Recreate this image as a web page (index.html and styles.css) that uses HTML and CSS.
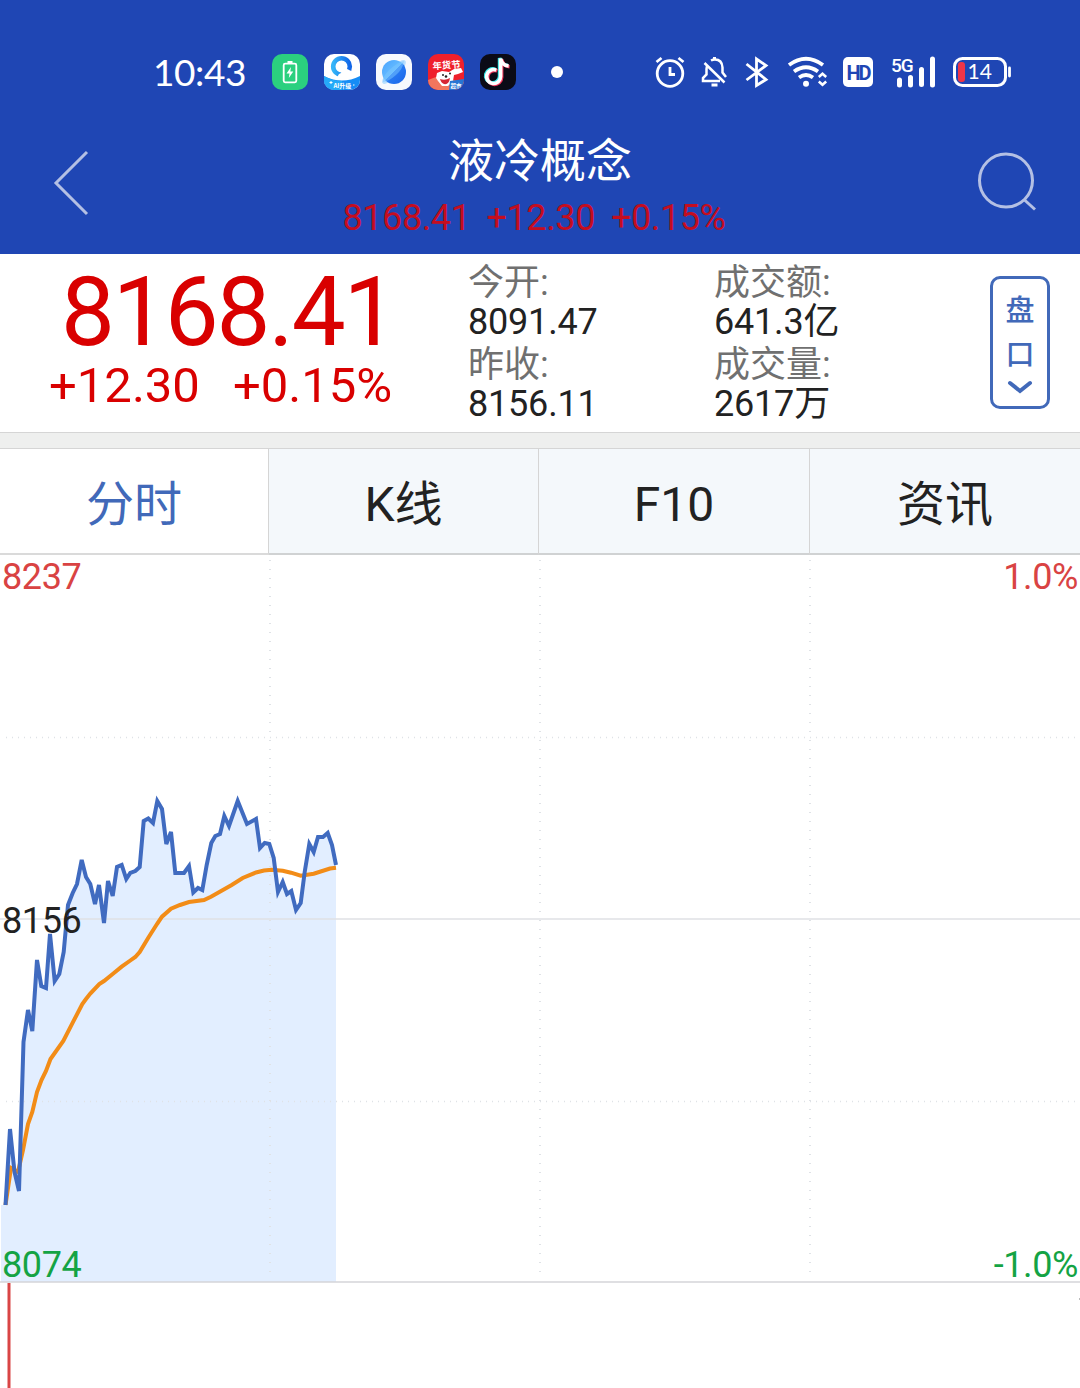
FILE: index.html
```html
<!DOCTYPE html>
<html lang="zh-CN">
<head>
    <meta charset="UTF-8">
    <meta name="viewport" content="width=device-width, initial-scale=1.0">
    <title>液冷概念</title>
    <link rel="stylesheet" href="styles.css">
</head>
<body>
    <div class="status-bar">
        <span class="time">10:43</span>
        <div class="apps">
            <svg width="36" height="36" viewBox="0 0 36 36">
                <rect width="36" height="36" rx="10" fill="#2bd07f"/>
                <rect x="11.700" y="9.700" width="12.600" height="18.600" rx="1.500" fill="none" stroke="#fff" stroke-width="1.800"/>
                <rect x="15.500" y="7" width="5" height="3" fill="#fff"/>
                <path d="M19 13l-4.500 6.500h3l-.7 4.500 4.500-6.500h-3z" fill="#fff"/>
            </svg>
            <svg width="36" height="36" viewBox="0 0 36 36">
                <defs>
                    <clipPath id="app-clip"><rect width="36" height="36" rx="10"/></clipPath>
                    <linearGradient id="ring" x1="0" y1="0" x2="1" y2="0"><stop offset="0" stop-color="#35b5f8"/><stop offset="1" stop-color="#1267e8"/></linearGradient>
                </defs>
                <g clip-path="url(#app-clip)">
                    <rect width="36" height="36" fill="#fff"/>
                    <path d="M0 22Q18 31 36 22V36H0z" fill="#168cf5"/>
                    <path d="M0 22Q8 27 18 27V36H0z" fill="#25aaf8"/>
                    <circle cx="17.500" cy="12.500" r="8.300" fill="none" stroke="url(#ring)" stroke-width="4.600"/>
                    <path d="M14 24a4 4 0 0 1 3-5 5 5 0 0 1 8-3 5 5 0 0 1 3 8z" fill="#fff"/>
                    <text x="9.500" y="34" class="app-text" font-size="6">AI升级</text>
                    <path d="M7 27v3M5.500 28.500h3M29 31h1.500" stroke="#fff" stroke-width="1"/>
                </g>
            </svg>
            <svg width="36" height="36" viewBox="0 0 36 36">
                <defs><linearGradient id="planet" x1="0" y1="0" x2="1" y2="1"><stop offset="0" stop-color="#48a2ff"/><stop offset=".48" stop-color="#65bcff"/><stop offset=".5" stop-color="#287cf4"/><stop offset="1" stop-color="#1a63e8"/></linearGradient></defs>
                <rect width="36" height="36" rx="10" fill="#f7f9fd"/>
                <ellipse cx="18" cy="18" rx="16" ry="5" transform="rotate(-45 18 18)" fill="#b8dfff"/>
                <circle cx="18" cy="18" r="12" fill="url(#planet)"/>
                <path d="M7 28Q6 23 13 16 22 8 28 7 27 15 20 21 12 28 7 28z" fill="#7ac5ff" opacity=".5"/>
            </svg>
            <svg width="36" height="36" viewBox="0 0 36 36">
                <g clip-path="url(#app-clip)">
                    <rect width="36" height="36" fill="#ef202b"/>
                    <path d="M0 26l8-3 18 3 10 2v8H0z" fill="#f2765d"/>
                    <path d="M9 19l5-2 7 1 5-3 7-1 2 4-5 2-4 1-1 6-5 5-6 0-4-5-2-3z" fill="#fff"/>
                    <path d="M12 25q5 2 10-1-1 7-6 6-3-1-4-5z" fill="#d72634"/>
                    <circle cx="15" cy="21" r="1" fill="#222"/><circle cx="22" cy="19.500" r="1" fill="#222"/>
                    <circle cx="18" cy="22.500" r="1.300" fill="#222"/>
                    <text x="4.500" y="14.500" class="app-text" font-size="9.300" transform="rotate(-4 18 10)">年货节</text>
                    <path d="M22 27l14-2v11H21z" fill="#2775d4"/>
                    <text x="22.500" y="33.500" class="app-text" font-size="5.500">超市</text>
                </g>
            </svg>
            <svg width="36" height="36" viewBox="0 0 36 36">
                <rect width="36" height="36" rx="10" fill="#0b0b16"/>
                <g fill="none" stroke-width="3.600">
                    <path d="M16.500 16a7 7 0 1 0 4.300 6.500V4.500c1 4.500 4 7 8 7.300" stroke="#35e5e5" transform="translate(-1.200 -.6)"/>
                    <path d="M16.500 16a7 7 0 1 0 4.300 6.500V4.500c1 4.500 4 7 8 7.300" stroke="#f4365b" transform="translate(.8 .9)"/>
                    <path d="M16.500 16a7 7 0 1 0 4.300 6.500V4.500c1 4.500 4 7 8 7.300" stroke="#fff" transform="translate(-.2 .1)"/>
                </g>
            </svg>
        </div>
        <span class="dot"></span>
        <div class="signals">
            <svg width="30" height="36" viewBox="655 54 30 36" fill="none" stroke="#fff" stroke-width="2.800">
                <circle cx="670" cy="73.500" r="12.800"/>
                <path d="M656.500 62l5-4M683.500 62l-5-4M670 67v7.500h5"/>
            </svg>
            <svg class="bell" width="28" height="36" viewBox="701 54 28 36" fill="none" stroke="#fff" stroke-width="2.500">
                <path d="M707.500 65q-1 1.500-1 4v5.500l-3.500 3.500v3h17M711 60.500q2-1 4-1 7 0 7.500 8v5l3.500 4.500M704.500 63l20 19.500"/>
                <path d="M714.500 57v3M711.500 85h6" stroke-width="3"/>
            </svg>
            <svg class="bluetooth" width="24" height="36" viewBox="745 54 24 36" fill="none" stroke="#fff" stroke-width="2.800">
                <path d="M746.500 64l19.500 15.500-9.500 6V59l9.500 6.500-19.500 14.500"/>
            </svg>
            <svg class="wifi" width="40" height="36" viewBox="787 54 40 36" fill="none" stroke="#fff" stroke-width="3.800">
                <path d="M789 65q17-12.500 34 0M794 71.500q12-8.500 24 0M799 77.500q7-5 14 0"/>
                <circle cx="806" cy="83.800" r="3" fill="#fff" stroke="none"/>
                <path d="M818.800 77l3.700-3.300 3.700 3.300M818.800 81.500l3.700 3.300 3.700-3.300" stroke-width="2.500"/>
            </svg>
            <svg class="hd" width="30" height="36" viewBox="0 0 30 36">
                <rect y="3" width="30" height="30" rx="5" fill="#fff"/>
                <text x="3.500" y="25.500" class="hd-text">HD</text>
            </svg>
            <svg class="cell" width="44" height="36" viewBox="891 54 44 36">
                <text x="891" y="71.500" class="cell-text">5G</text>
                <path d="M899.500 80v5M910.500 77.500v7.500M921.500 69.500v15M932.500 59v26" stroke="#fff" stroke-width="5" stroke-linecap="round"/>
            </svg>
            <svg class="battery" width="58" height="36" viewBox="953 54 58 36">
                <rect x="954.500" y="58.500" width="51" height="27" rx="8" fill="none" stroke="#fff" stroke-width="3"/>
                <rect x="958" y="62" width="7" height="20" rx="3" fill="#ef3548"/>
                <path d="M1009.500 68v8" stroke="#fff" stroke-width="2.800" stroke-linecap="round"/>
                <text x="967.500" y="79" class="battery-text">14</text>
            </svg>
        </div>
    </div>

    <header class="title-bar">
        <svg class="back" width="36" height="64" viewBox="0 0 36 64"><path d="M34 1L3 32l31 31"/></svg>
        <div class="title">
            <h1>液冷概念</h1>
            <p class="sub-quote"><span>8168.41</span><span>+12.30</span><span>+0.15%</span></p>
        </div>
        <svg class="search" width="60" height="60" viewBox="0 0 60 60"><circle cx="28" cy="28.500" r="26.500"/><path d="M46 47.500l11 10"/></svg>
    </header>

    <section class="quote">
        <div class="price">
            <div class="price-now">8168.41</div>
            <div class="price-change"><span>+12.30</span><span>+0.15%</span></div>
        </div>
        <dl class="stats">
            <dt>今开:</dt><dd>8091.47</dd>
            <dt>昨收:</dt><dd>8156.11</dd>
        </dl>
        <dl class="stats">
            <dt>成交额:</dt><dd>641.3亿</dd>
            <dt>成交量:</dt><dd>2617万</dd>
        </dl>
        <button class="pankou">
            <span>盘</span>
            <span>口</span>
            <svg width="26" height="16" viewBox="0 0 26 16"><path d="M3 4l10 8 10-8"/></svg>
        </button>
    </section>

    <nav class="tabs">
        <a class="tab active">分时</a>
        <a class="tab kline">K线</a>
        <a class="tab latin">F10</a>
        <a class="tab">资讯</a>
    </nav>

    <svg class="chart" width="1080" height="833" viewBox="0 555 1080 833">
        <path class="area" d="M1 1282V1205H5.500L10 1131 14.500 1172 19 1190 23.500 1042 28 1010 32.300 1031 37 960 41.300 986 46 988 50 934 54.700 981 59.300 974 63.700 952 68 905 72.700 893 77 884 81.700 860 86 877 90.300 884 95 904 99 885 104 923 108 881 112.700 896 117 867 121.700 865 126.300 879 130.300 873 135.300 871 139.700 867 143.700 821 148.300 818.500 153 823 157 799 162 809 166.300 844 171 832 175.300 873 184 873 189 865 193.300 892.500 198 888 202.300 890 206.700 865 211.300 843 215.300 836 220 834 224.300 815 229 826 237.700 801 247 824 256 819 260 848 264.700 843 269.300 844 273.700 858 278 892 282.700 882 287 894 291.300 891 296 910 300.700 903 304.700 872 309.300 843 313.700 852 318 837 323 837 327.700 833 332 845 336 865V1282z"/>
        <path class="grid-x" d="M6 737.500H1080M6 1101.500H1080"/>
        <path class="grid-y" d="M270 560V1280M540 560V1280M810 560V1280"/>
        <path class="line-mid" d="M0 919H1080"/>
        <path class="line-bottom" d="M0 1282H1080"/>
        <!-- average price -->
        <polyline class="average" points="5.500,1205 11,1168 18,1172 23,1150 28,1124 32.300,1112 37,1092 41.500,1080 46,1071 50.500,1059 63.300,1041 72.700,1022.700 82.300,1004 86,999 90.300,993.500 99.300,984 104,981 112.700,974 121.700,966.700 130.300,960.500 135.300,957 139.700,952 148.300,937.700 157,924 162,916.700 171,908.700 180,905 189,902 204,900 211,896.700 231.700,885 242.700,878 256,872.500 264,870.500 271.700,869.700 282.700,870.700 291,872.700 300.700,875.700 313.700,873.700 330,868.500 336,867.700"/>
        <!-- current price -->
        <polyline class="current" points="5.500,1205 10,1129 14.500,1172 19,1191 23.500,1042 28,1010 32.300,1031 37,960 41.300,986 46,988 50,934 54.700,981 59.300,974 63.700,952 68,905 72.700,893 77,884 81.700,860 86,877 90.300,884 95,904 99,885 104,923 108,881 112.700,896 117,867 121.700,865 126.300,879 130.300,873 135.300,871 139.700,867 143.700,821 148.300,818.500 153,823 157.300,801 162,809 166.300,844 171,832 175.300,873 184,873 189,866 193.300,892.500 198,888 202.300,890 206.700,865 211.300,843 215.300,836 220,834 224.300,816 229,826 237.700,801 247,824 256,819 260,848 264.700,843 269.300,844 273.700,858 278,892 282.700,882 287,894 291.300,891 296,910 300.700,903 304.700,872 309.300,844 313.700,852 318,837 323,837 327.700,833 332,845 336,865"/>
        <path class="volume" d="M9 1283V1388"/>
        <path d="M1079 1299h1" stroke="#bbb" stroke-width="2"/>
        <text class="up" x="2" y="589">8237</text>
        <text class="up" x="1078" y="589" text-anchor="end">1.0%</text>
        <text class="flat" x="2" y="933">8156</text>
        <text class="down" x="2" y="1277">8074</text>
        <text class="down" x="1078" y="1277" text-anchor="end">-1.0%</text>
    </svg>
</body>
</html>
```
FILE: styles.css
```css
* {
    box-sizing: border-box;
}

body {
    margin: 0;
    width: 1080px;
    height: 1388px;
    overflow: hidden;
    background: #fff;
    color: #222;
    font-family: Roboto, "Noto Sans CJK SC", sans-serif;
}

svg {
    display: block;
    flex: none;
    overflow: visible;
}

.status-bar {
    display: flex;
    align-items: center;
    height: 90px;
    padding: 54px 69px 0 153px;
    background: #1f46b4;
    color: #fff;
}

.time {
    width: 119px;
    font-family: Lato, sans-serif;
    font-size: 37px;
    line-height: 36px;
    letter-spacing: -0.4px;
}

.apps {
    display: flex;
    gap: 16px;
}

.app-text {
    fill: #fff;
    font-family: "Noto Sans CJK SC", sans-serif;
    font-weight: bold;
}

.dot {
    width: 12px;
    height: 12px;
    margin-left: 35px;
    border-radius: 50%;
    background: #fff;
}

.signals {
    display: flex;
    margin-left: auto;
}

.bell {
    margin-left: 16px;
}

.bluetooth {
    margin-left: 16px;
}

.wifi {
    margin-left: 18px;
}

.hd {
    margin-left: 16px;
}

.cell,
.battery {
    margin-left: 18px;
}

.hd-text {
    fill: #1f46b4;
    font-size: 20px;
    font-weight: bold;
    letter-spacing: -2px;
}

.cell-text {
    fill: #fff;
    font-size: 19px;
    font-weight: 500;
    letter-spacing: -1px;
}

.battery-text {
    fill: #fff;
    font-family: Lato, sans-serif;
    font-size: 21px;
}

.title-bar {
    display: flex;
    justify-content: space-between;
    height: 164px;
    padding: 0 42px 0 53px;
    background: #1f46b4;
}

.back,
.search {
    fill: none;
    stroke: #b4c0e4;
    stroke-width: 3;
}

.back {
    margin-top: 61px;
}

.search {
    margin-top: 62px;
}

.title {
    display: flex;
    flex-direction: column;
    align-items: center;
    padding-top: 41px;
    margin-right: -13px;
}

h1 {
    margin: 0;
    color: #fff;
    font-size: 46px;
    font-weight: 400;
    line-height: 60px;
}

.sub-quote {
    display: flex;
    gap: 16px;
    margin: 0 12px 0 0;
    color: #c40d20;
    font-size: 36px;
    line-height: 54px;
    letter-spacing: -0.4px;
}

.quote {
    display: flex;
    height: 179px;
    border-bottom: 1px solid #d5d5d5;
}

.price {
    width: 468px;
    color: #d90000;
}

.price-now {
    padding: 10px 0 0 61px;
    font-size: 96px;
    line-height: 96px;
    letter-spacing: -2.1px;
}

.price-change {
    display: flex;
    gap: 33px;
    padding-left: 49px;
    font-size: 49px;
    line-height: 52px;
}

.stats {
    width: 246px;
    margin: 7px 0 0;
    font-size: 36px;
    line-height: 41px;
    letter-spacing: -0.2px;
}

.stats dt {
    padding-top: 4px;
    color: #707070;
    line-height: 37px;
    letter-spacing: 0;
}

.stats dd {
    margin: 0;
}

.pankou {
    display: flex;
    flex-direction: column;
    align-items: center;
    width: 60px;
    height: 133px;
    margin: 22px 0 0 30px;
    padding: 7px 0 0;
    border: 3px solid #4169b9;
    border-radius: 10px;
    background: #fff;
    color: #4169b9;
    font-family: "Noto Sans CJK SC", sans-serif;
    font-size: 29px;
    font-weight: 500;
    line-height: 44px;
}

.pankou svg {
    margin-top: 5px;
    fill: none;
    stroke: #4169b9;
    stroke-width: 4;
    stroke-linecap: round;
}

.tabs {
    display: flex;
    height: 122px;
    border-top: 15px solid #eeefee;
}

.tab {
    flex: 1;
    padding-top: 3px;
    border-top: 1px solid #d5d5d5;
    border-right: 1px solid #d5d5d5;
    border-bottom: 2px solid #d0d2d3;
    background: #f4f8fb;
    font-size: 48px;
    line-height: 105px;
    text-align: center;
}

.tab:last-child {
    border-right: 0;
}

.kline {
    flex: 0 0 270px;
}

.latin {
    flex: 0 0 271px;
}

.active {
    flex: 0 0 269px;
    border-bottom-color: #dadada;
    background: #fff;
    color: #4169b9;
}

.chart text {
    font-size: 36px;
    letter-spacing: -0.4px;
}

.area {
    fill: #e2eeff;
}

.grid-x,
.grid-y {
    fill: none;
    stroke: #dfe2e6;
}

.grid-x {
    stroke-width: 1.5;
    stroke-dasharray: 1 5;
}

.grid-y {
    stroke-width: 2;
    stroke-dasharray: 1 8;
}

.line-mid {
    stroke: #dfe1e5;
    stroke-width: 1.5;
}

.line-bottom {
    stroke: #d5d5d9;
    stroke-width: 1.5;
}

.average,
.current {
    fill: none;
    stroke-width: 4;
}

.average {
    stroke: #f28c17;
}

.current {
    stroke: #406bc0;
}

.volume {
    stroke: #d94545;
    stroke-width: 3;
}

.up {
    fill: #d94343;
}

.flat {
    fill: #222;
}

.down {
    fill: #14a344;
}
```
